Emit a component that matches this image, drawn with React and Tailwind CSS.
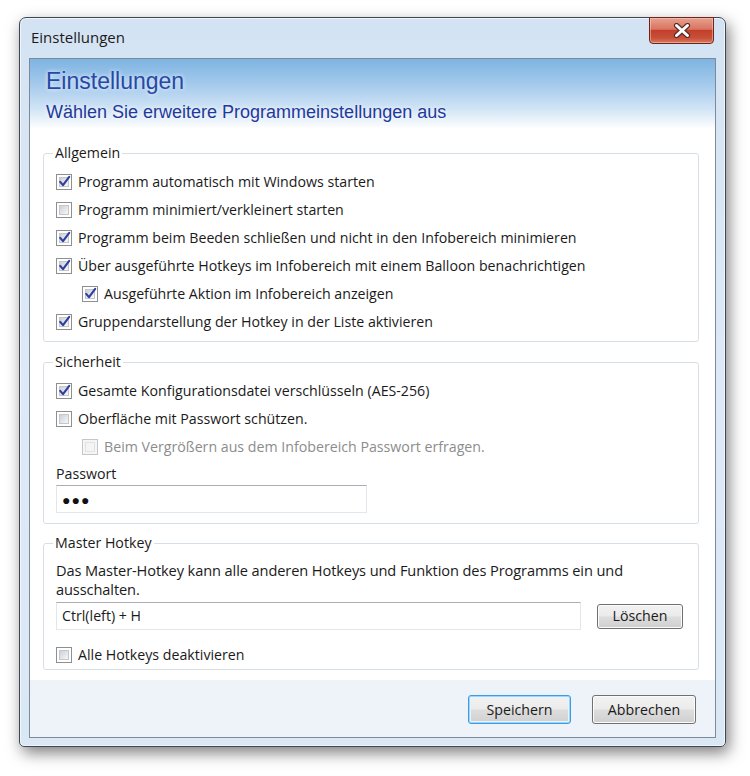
import React from "react";

function Check({ checked, disabled }) {
  return (
    <span
      className={
        disabled
          ? "w-[16px] h-[16px] shrink-0 border border-[#c6c6c6] bg-[#f5f5f5] p-[2px] flex"
          : "w-[16px] h-[16px] shrink-0 border border-[#8e8f8f] bg-white p-[2px] flex"
      }
    >
      <span
        className={
          disabled
            ? "flex-1 bg-[#f4f4f4] border border-[#e2e2e2] relative"
            : "flex-1 bg-gradient-to-br from-[#cdd1d6] to-[#f7f7f7] border border-[#c3c6cb] relative"
        }
      >
        {checked && (
          <svg
            className="absolute left-[-2px] top-[-3px]"
            width="13"
            height="13"
            viewBox="0 0 13 13"
          >
            <path
              d="M2.2 6.8 L5 10.2 L11.2 1.8"
              fill="none"
              stroke="#2e3f9e"
              strokeWidth="2.1"
              strokeLinejoin="round"
              strokeLinecap="round"
            />
          </svg>
        )}
      </span>
    </span>
  );
}

function Row({ checked, disabled, indent, children }) {
  return (
    <div
      className={
        indent
          ? "h-[28px] flex items-center gap-[6px] pl-[26px]"
          : "h-[28px] flex items-center gap-[6px]"
      }
    >
      <Check checked={checked} disabled={disabled} />
      <span className={disabled ? "text-[#8c8c8c]" : "text-[#1a1a1a]"}>
        {children}
      </span>
    </div>
  );
}

function Group({ title, className, children }) {
  return (
    <fieldset
      className={
        "border border-[#d5dfe5] rounded-[3px] pl-[12px] pr-[12px] " + className
      }
    >
      <legend className="-ml-[3px] px-[2px] leading-[20px] text-[#1a1a1a]">
        {title}
      </legend>
      {children}
    </fieldset>
  );
}

function WinButton({ children, primary }) {
  return (
    <div
      className={
        primary
          ? "w-[103px] h-[29px] rounded-[3px] border border-[#3c9be3] shadow-[inset_0_0_0_1px_#9fd6f7,inset_0_0_0_2px_#e6f5fd] bg-[linear-gradient(180deg,#f2f2f2_0%,#ebebeb_48%,#dddddd_52%,#d0d0d0_100%)] flex items-center justify-center text-[#1a1a1a]"
          : "w-[104px] h-[29px] rounded-[3px] border border-[#707070] shadow-[inset_0_0_0_1px_#fcfcfc] bg-[linear-gradient(180deg,#f2f2f2_0%,#ebebeb_48%,#dddddd_52%,#cfcfcf_100%)] flex items-center justify-center text-[#1a1a1a]"
      }
    >
      {children}
    </div>
  );
}

export default function App() {
  return (
    <div className="w-[750px] h-[776px] bg-white pt-[17px] pl-[19px] font-['Open_Sans',sans-serif] text-[14.2px]">
      <div className="w-[707px] h-[730px] rounded-t-[7px] rounded-b-[5px] border border-[#3f4852] bg-gradient-to-b from-[#d4e3f3] via-[#dde9f6] to-[#dae7f5] shadow-[3px_6px_15px_rgba(0,0,0,0.5),inset_0_0_0_1px_rgba(255,255,255,0.6)] flex flex-col">
        {/* Title bar */}
        <div className="h-[40px] flex justify-between items-start pl-[11px] pr-[11px]">
          <span className="mt-[9px] text-[15px] leading-[20px] text-[#1b1b1b]">
            Einstellungen
          </span>
          <div className="-mt-[1px] w-[65px] h-[27px] rounded-b-[4px] border border-[#6b2519] bg-[linear-gradient(180deg,#e7a190_0%,#d9735f_45%,#c23f2b_50%,#c9503a_80%,#d9775e_100%)] shadow-[inset_0_0_0_1px_rgba(255,220,210,0.45)] flex items-center justify-center">
            <svg width="20" height="15" viewBox="0 0 20 15">
              <path
                d="M4.5 2.5 L15.5 12.5 M15.5 2.5 L4.5 12.5"
                stroke="#5a2a24"
                strokeWidth="5.2"
                strokeLinecap="round"
                fill="none"
              />
              <path
                d="M4.5 2.5 L15.5 12.5 M15.5 2.5 L4.5 12.5"
                stroke="#ffffff"
                strokeWidth="3"
                strokeLinecap="round"
                fill="none"
              />
            </svg>
          </div>
        </div>

        {/* Client area */}
        <div className="mx-[9px] h-[680px] border border-[#7e8a97] bg-white flex flex-col">
          {/* Header band */}
          <div className="h-[70px] pt-[9px] pl-[16px] bg-[linear-gradient(180deg,#7eb4e2_0%,#a3c9ec_35%,#cfe3f5_70%,#ffffff_100%)] font-['Liberation_Sans',Arial,sans-serif]">
            <div className="text-[23px] leading-[26px] text-[#2848a6] [text-shadow:0_0_4px_rgba(255,255,255,0.95)]">
              Einstellungen
            </div>
            <div className="mt-[7px] text-[18px] leading-[22px] text-[#22399b] [text-shadow:0_0_4px_rgba(255,255,255,0.95)]">
              Wählen Sie erweitere Programmeinstellungen aus
            </div>
          </div>

          {/* Content */}
          <div className="flex-1 pl-[13px] pr-[16px] pt-[14px] flex flex-col">
            <Group title="Allgemein" className="pt-[5px] pb-[5px]">
              <Row checked>Programm automatisch mit Windows starten</Row>
              <Row>Programm minimiert/verkleinert starten</Row>
              <Row checked>
                Programm beim Beeden schließen und nicht in den Infobereich
                minimieren
              </Row>
              <Row checked>
                Über ausgeführte Hotkeys im Infobereich mit einem Balloon
                benachrichtigen
              </Row>
              <Row checked indent>
                Ausgeführte Aktion im Infobereich anzeigen
              </Row>
              <Row checked>
                Gruppendarstellung der Hotkey in der Liste aktivieren
              </Row>
            </Group>

            <Group title="Sicherheit" className="mt-[10px] pt-[5px] pb-[10px]">
              <Row checked>Gesamte Konfigurationsdatei verschlüsseln (AES-256)</Row>
              <Row>Oberfläche mit Passwort schützen.</Row>
              <Row disabled indent>
                Beim Vergrößern aus dem Infobereich Passwort erfragen.
              </Row>
              <div className="mt-[3px] leading-[20px] text-[#1a1a1a]">Passwort</div>
              <div className="mt-[1px] w-[311px] h-[28px] border border-[#e2e7ec] border-t-[#abadb3] bg-white flex items-center pl-[5px] text-[14px] tracking-[1px] text-[#111]">
                ●●●
              </div>
            </Group>

            <Group title="Master Hotkey" className="mt-[9px] pt-[8px] pb-[2px]">
              <div className="leading-[19px] text-[14.6px] tracking-[-0.1px] text-[#1a1a1a] pr-[30px]">
                Das Master-Hotkey kann alle anderen Hotkeys und Funktion des
                Programms ein und ausschalten.
              </div>
              <div className="mt-[3px] flex items-center gap-[16px]">
                <div className="w-[525px] h-[28px] border border-[#e2e7ec] border-t-[#abadb3] bg-white flex items-center pl-[5px] text-[#1a1a1a]">
                  Ctrl(left) + H
                </div>
                <div className="w-[86px] h-[25px] rounded-[3px] border border-[#707070] shadow-[inset_0_0_0_1px_#fcfcfc] bg-[linear-gradient(180deg,#f2f2f2_0%,#ebebeb_48%,#dddddd_52%,#cfcfcf_100%)] flex items-center justify-center text-[#1a1a1a]">
                  Löschen
                </div>
              </div>
              <div className="mt-[13px] h-[24px] flex items-center gap-[6px]">
                <Check />
                <span className="text-[#1a1a1a]">Alle Hotkeys deaktivieren</span>
              </div>
            </Group>
          </div>

          {/* Bottom bar */}
          <div className="h-[57px] bg-[#eef3f9] pt-[15px] pr-[19px] flex justify-end items-start gap-[21px]">
            <WinButton primary>Speichern</WinButton>
            <WinButton>Abbrechen</WinButton>
          </div>
        </div>
      </div>
    </div>
  );
}
